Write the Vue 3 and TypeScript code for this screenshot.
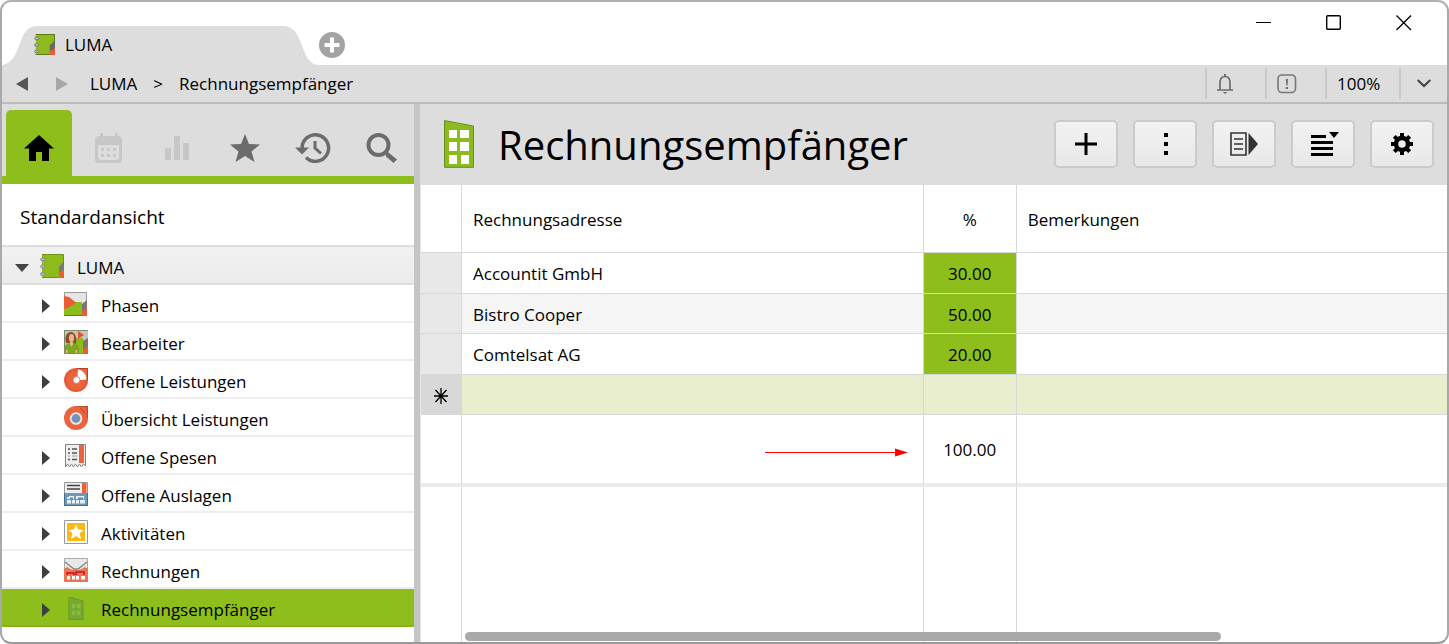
<script setup lang="ts">
import { ref } from 'vue'

interface TreeItem {
  label: string
  icon: string
  expandable: boolean
}

interface Recipient {
  address: string
  percent: string
  note: string
}

const items: TreeItem[] = [
  { label: 'Phasen', icon: 'phases', expandable: true },
  { label: 'Bearbeiter', icon: 'people', expandable: true },
  { label: 'Offene Leistungen', icon: 'open', expandable: true },
  { label: 'Übersicht Leistungen', icon: 'overview', expandable: false },
  { label: 'Offene Spesen', icon: 'receipt', expandable: true },
  { label: 'Offene Auslagen', icon: 'expenses', expandable: true },
  { label: 'Aktivitäten', icon: 'activity', expandable: true },
  { label: 'Rechnungen', icon: 'invoice', expandable: true },
  { label: 'Rechnungsempfänger', icon: 'building', expandable: true },
]

const recipients: Recipient[] = [
  { address: 'Accountit GmbH', percent: '30.00', note: '' },
  { address: 'Bistro Cooper', percent: '50.00', note: '' },
  { address: 'Comtelsat AG', percent: '20.00', note: '' },
]

const selected = ref('Rechnungsempfänger')
</script>

<template>
  <div class="window">
    <header class="titlebar">
      <div class="tab">
        <svg class="tab-shape" viewBox="0 0 315 39" aria-hidden="true">
          <path d="M0 39C11 37 14 28 18 17C22 6 26 0 36 0H281C291 0 295 7 299 17C303 28 306 37 315 39Z" fill="#ddd" />
        </svg>
        <svg class="tab-icon" viewBox="0 0 24 24" aria-hidden="true">
          <path d="M2 0H24V24H2Z" fill="#8dbb1c" /><path d="M2 .5H23.5V8M2 23.5H18" fill="none" stroke="#587d17" stroke-width="1.5" />
          <path d="M18 13L24 7V17L18 21Z" fill="#686868" /><path d="M18 20L24 16V24H18Z" fill="#e95d35" />
          <g fill="#bbb" stroke="#777"><ellipse cx="3" cy="5" rx="2.5" ry="1.5" /><ellipse cx="3" cy="12.5" rx="2.5" ry="1.5" /><ellipse cx="3" cy="20" rx="2.5" ry="1.5" /></g>
        </svg>
        <span class="tab-label">LUMA</span>
      </div>
      <button class="bare add-tab" aria-label="Neuer Tab">
        <svg width="26" height="26" viewBox="0 0 26 26"><circle cx="13" cy="13" r="13" fill="#a3a3a3" /><path d="M13 5.5V20.5M5.5 13H20.5" stroke="#fff" stroke-width="4" /></svg>
      </button>
      <div class="win-controls">
        <button class="bare" aria-label="Minimieren"><svg width="16" height="16" viewBox="0 0 16 16"><path d="M0 7.5H15" stroke="#000" /></svg></button>
        <button class="bare" aria-label="Maximieren"><svg width="16" height="16" viewBox="0 0 16 16"><rect x=".7" y=".7" width="13.6" height="13.6" rx="1" fill="none" stroke="#000" stroke-width="1.4" /></svg></button>
        <button class="bare" aria-label="Schliessen"><svg width="16" height="16" viewBox="0 0 16 16"><path d="M.5 .5L15 15M15 .5L.5 15" stroke="#000" stroke-width="1.3" /></svg></button>
      </div>
    </header>

    <div class="navbar">
      <button class="bare history-btn" aria-label="Zurück"><svg width="12" height="14" viewBox="0 0 12 14"><path d="M12 0V14L0 7Z" fill="#555" /></svg></button>
      <button class="bare history-btn" aria-label="Vorwärts"><svg width="12" height="14" viewBox="0 0 12 14"><path d="M0 0V14L12 7Z" fill="#a6a6a6" /></svg></button>
      <nav class="crumbs" aria-label="Pfad">
        <a href="#luma">LUMA</a><span>&gt;</span><a href="#empfaenger">Rechnungsempfänger</a>
      </nav>
      <div class="status">
        <button class="bare status-cell" aria-label="Mitteilungen">
          <svg width="16" height="20" viewBox="0 0 16 20"><path d="M0 16H16M3 16V9C3 5 5 2.5 8 2.5S13 5 13 9V16" fill="none" stroke="#6c6c6c" stroke-width="1.7" /><path d="M7 0H9V3H7ZM6 18H10L9 19.5H7Z" fill="#6c6c6c" /></svg>
        </button>
        <button class="bare status-cell" aria-label="Hinweise">
          <svg width="20" height="20" viewBox="0 0 20 20"><rect x="1" y="1" width="17.5" height="17.5" rx="4" fill="none" stroke="#777" stroke-width="1.6" /><path d="M8.8 5H11L10.5 11.5H9.3ZM8.8 13H11V15H8.8Z" fill="#6c6c6c" /></svg>
        </button>
        <span class="status-cell zoom">100%</span>
        <button class="bare status-cell more" aria-label="Zoomstufe wählen"><svg width="14" height="9" viewBox="0 0 14 9"><path d="M.7 1L7 7L13.3 1" fill="none" stroke="#444" stroke-width="2.2" /></svg></button>
      </div>
    </div>

    <div class="body">
      <aside class="sidebar">
        <nav class="side-tabs" aria-label="Bereiche">
          <button class="bare side-tab active" aria-label="Start"><svg width="30" height="26" viewBox="0 0 30 26"><path d="M15 0L30 13.5H25V26H18V17H12V26H5V13.5H0Z" /></svg></button>
          <button class="bare side-tab" aria-label="Kalender">
            <svg width="28" height="30" viewBox="0 0 28 30"><path d="M5 0H8V3H20V0H23V3C26 3 27 5 27 8V25C27 29 26 30 22 30H5C1 30 0 29 0 25V8C0 5 1 3 5 3ZM3 12V24C3 26 4 27 6 27H21C23 27 24 26 24 24V12Z" fill="#c7c7c7" fill-rule="evenodd" /><path d="M6 15H9V18H6ZM12 15H15V18H12ZM18 15H21V18H18ZM6 21H9V24H6ZM12 21H15V24H12ZM18 21H21V24H18Z" fill="#c7c7c7" /></svg>
          </button>
          <button class="bare side-tab" aria-label="Berichte"><svg width="24" height="24" viewBox="0 0 24 24"><path d="M0 12H6V24H0ZM9 0H15V24H9ZM18 7H24V24H18Z" fill="#c7c7c7" /></svg></button>
          <button class="bare side-tab" aria-label="Favoriten"><svg width="30" height="28" viewBox="0 0 30 28"><path d="M15 0L19 10L30 10.5L21.5 17.5L24.5 28L15 22L5.5 28L8.5 17.5L0 10.5L11 10Z" fill="#6c6c6c" /></svg></button>
          <button class="bare side-tab" aria-label="Verlauf">
            <svg width="36" height="30" viewBox="0 0 36 30"><path d="M7 15A13.3 13.3 0 1 1 11 24.6" fill="none" stroke="#6c6c6c" stroke-width="3.5" /><path d="M0 14.5H14L7 21.5Z" fill="#6c6c6c" /><path d="M20 8V15L26 20.5" fill="none" stroke="#6c6c6c" stroke-width="3" /></svg>
          </button>
          <button class="bare side-tab" aria-label="Suche"><svg width="32" height="30" viewBox="0 0 32 30"><circle cx="13.5" cy="12" r="10" fill="none" stroke="#6c6c6c" stroke-width="4" /><path d="M20 18L23.5 19.5L32 26.5L28.5 30L21 23.5Z" fill="#6c6c6c" /></svg></button>
        </nav>
        <h2 class="view-name">Standardansicht</h2>
        <ul class="tree">
          <li class="row root">
            <button class="bare row-btn">
              <svg class="arrow-down" viewBox="0 0 14 8" aria-hidden="true"><path d="M0 0H14L7 8Z" fill="#444" /></svg>
              <svg class="icon" viewBox="0 0 24 24" aria-hidden="true">
                <path d="M2 0H24V24H2Z" fill="#8dbb1c" /><path d="M2 .5H23.5V8M2 23.5H18" fill="none" stroke="#6b921b" />
                <path d="M19 13L24 7V17L19 21Z" fill="#777" /><path d="M19 18L24 16V24H19Z" fill="#e95d35" />
                <g fill="#bbb" stroke="#888"><ellipse cx="2.8" cy="5.5" rx="2.3" ry="1.5" /><ellipse cx="2.8" cy="12.5" rx="2.3" ry="1.5" /><ellipse cx="2.8" cy="20" rx="2.3" ry="1.5" /></g>
              </svg>
              <span class="row-label">LUMA</span>
            </button>
          </li>
          <li v-for="item in items" :key="item.label" class="row" :class="{ selected: item.label === selected }">
            <button class="bare row-btn child" @click="selected = item.label">
              <svg class="arrow" viewBox="0 0 8 14" aria-hidden="true"><path v-if="item.expandable" d="M0 0L8 7L0 14Z" fill="#3f3f3f" /></svg>
              <svg class="icon" viewBox="0 0 24 24" aria-hidden="true">
                <g v-if="item.icon === 'phases'">
                  <path d="M0 0H23V24H0Z" fill="#e5e5e5" /><path d="M.5 5V.5H22.5V10" fill="none" stroke="#999" /><path d="M0 10H18V24H0Z" fill="#8dbb1c" /><path d="M0 23.5H18" stroke="#56801a" />
                  <path d="M0 4L5 5L12 10.5L5 15.5L0 17Z" fill="#e95d35" /><path d="M18 12L23 8V16L18 22Z" fill="#777" /><path d="M18 19L23 16V24H18Z" fill="#e95d35" />
                </g>
                <g v-else-if="item.icon === 'people'">
                  <path d="M0 0H24V24H0Z" fill="#c4c4c4" /><path d="M12 8H19V24H12Z" fill="#8dbb1c" /><path d="M19 11L24 8V18L19 22Z" fill="#777" /><path d="M19 19L24 16V24H19Z" fill="#e95d35" /><path d="M14 1L20 5L14 9Z" fill="#e94f32" />
                  <path d="M2 13C0 6 3 2 7 2S13 7 12 14Z" fill="#88502d" /><ellipse cx="7.5" cy="8" rx="2.5" ry="4" fill="#f0b58c" /><path d="M0 16L5 13L7.5 16L10 13L15 16V24H0Z" fill="#79a91a" /><path d="M5.5 12H9.5L7.5 17ZM2 20H3.5V24H2ZM11.5 20H13V24H11.5Z" fill="#f0b58c" /><path d="M.5 0V24M0 .5H24M0 23.5H19" fill="none" stroke="#7d8a68" />
                </g>
                <g v-else-if="item.icon === 'open'">
                  <path d="M12 0H24V13A12 11 0 0 1 12 24A12 12 0 0 1 0 12A12 12 0 0 1 12 0Z" fill="#e9633d" /><path d="M13 .5H23.5V12" fill="none" stroke="#b8401d" /><circle cx="12" cy="12.5" r="10.5" fill="none" stroke="#d8532e" />
                  <path d="M14 1.5C18 1.5 22.5 6 22.5 11.5L16 12L13.5 9Z" fill="#fff" /><circle cx="12.5" cy="12" r="3.5" fill="#fff" stroke="#e9633d" stroke-width=".7" />
                </g>
                <g v-else-if="item.icon === 'overview'">
                  <path d="M12 0H24V13A12 11 0 0 1 12 24A12 12 0 0 1 0 12A12 12 0 0 1 12 0Z" fill="#e9633d" /><path d="M14 .5H23.5V12M16 2L22 8" fill="none" stroke="#c5451f" />
                  <circle cx="12" cy="12.5" r="6.3" fill="#f2e5df" /><circle cx="12" cy="12.5" r="4.4" fill="#7195b4" />
                </g>
                <g v-else-if="item.icon === 'receipt'">
                  <path d="M1.5 .5H21.5V22L19.5 20L17.5 23L15.5 20L13.5 23L11.5 20L9.5 23L7.5 20L5.5 23L3.5 20L1.5 23Z" fill="#eee" stroke="#858585" /><path d="M15 1H20V19H15Z" fill="#e9633d" /><path d="M4 5H6M8 5H13M4 9H6M8 9H13M4 15.5H6M8 15.5H13" stroke="#555" stroke-width="1.5" /><path d="M4 12H6M8 12H13" stroke="#999" />
                </g>
                <g v-else-if="item.icon === 'expenses'">
                  <path d="M.5 .5H23.5V12H.5Z" fill="#eee" stroke="#999" /><path d="M18 1H22.5V11H18Z" fill="#e9633d" /><path d="M3 3.5H16M3 7H16" stroke="#444" stroke-width="1.3" /><path d="M0 11H24V24H0Z" fill="#6d98bb" /><path d="M.5 11V23.5H23.5V11" fill="none" stroke="#426f95" />
                  <path d="M3 15H5V14H10V17H3ZM12 14H20V17H12ZM3 18H7V21.5H3ZM8 18H11V21.5H8ZM12 18H15V21.5H12ZM16 18H21V21.5H16Z" fill="#e8f0f6" /><path d="M6 15.5H9V17H6ZM14 15.5H19V17H14Z" fill="#5685ab" />
                </g>
                <g v-else-if="item.icon === 'activity'">
                  <path d="M.5 .5H23.5V23.5H.5Z" fill="#fff" stroke="#999" /><path d="M3 3H21V21H3Z" fill="#fdb813" /><path d="M12 4.5L14.2 9.5L19.5 10L15.5 13.5L17 19L12 16L7 19L8.5 13.5L4.5 10L9.8 9.5Z" fill="#fff" />
                </g>
                <g v-else-if="item.icon === 'invoice'">
                  <path d="M.5 .5H23.5V12H.5Z" fill="#e8e8e8" stroke="#aaa" /><path d="M0 11L3 9L8 12H16L21 9L24 11V24H0Z" fill="#ed744e" /><path d="M1 4L10 11H14L23 4" fill="none" stroke="#888" stroke-width="1.5" />
                  <path d="M3 17V15H10V17M12 17V14H20V17" fill="none" stroke="#c8102e" stroke-width="1.5" /><path d="M3 18H6V21.5H3ZM8 18H11V21.5H8ZM12 18H15V21.5H12ZM17 18H21V21.5H17Z" fill="#fff" />
                </g>
                <g v-else>
                  <path d="M5 1L19 5V23.5H5Z" fill="#75aa35" stroke="#6c952b" /><path d="M8 8H11V12H8ZM13 8H16.5V12H13ZM8 15H11V19H8ZM13 15H16.5V19H13Z" fill="#8dbb35" />
                </g>
              </svg>
              <span class="row-label">{{ item.label }}</span>
            </button>
          </li>
        </ul>
      </aside>

      <main class="content">
        <header class="page-head">
          <svg class="building" viewBox="0 0 30 48" aria-hidden="true"><path d="M.5 .6L29.5 6V47.5H.5Z" fill="#8dbb1f" /><path d="M.5 .6L29.5 6V47.3H.5Z" fill="none" stroke="#688f20" /><path d="M5 10H13V18H5ZM16 10H25V18H16ZM5 22H13V31H5ZM16 22H25V31H16ZM5 35H13V44H5ZM17 35H25V44H17Z" fill="#fff" /></svg>
          <h1>Rechnungsempfänger</h1>
          <div class="tools">
            <button class="tool" aria-label="Hinzufügen"><svg width="22" height="22" viewBox="0 0 22 22"><path d="M11 0V22M0 11H22" stroke="#000" stroke-width="3" /></svg></button>
            <button class="tool" aria-label="Mehr"><svg width="22" height="22" viewBox="0 0 22 22"><path d="M10 0H14V4H10ZM10 9H14V13H10ZM10 18H14V22H10Z" /></svg></button>
            <button class="tool" aria-label="Bericht"><svg width="28" height="24" viewBox="0 0 28 24"><path d="M1 1H16V23H1Z" fill="none" stroke="#333" stroke-width="1.6" /><path d="M4 7H13M4 12H13M4 17H13" stroke="#333" stroke-width="1.6" /><path d="M18.5 1L28 12L18.5 23Z" fill="#333" /></svg></button>
            <button class="tool" aria-label="Ansicht"><svg width="28" height="24" viewBox="0 0 28 24"><path d="M2 3H17V6H2ZM2 9H24V12H2ZM2 15H24V18H2ZM2 21H24V24H2ZM20 0H30L25 6Z" /></svg></button>
            <button class="tool" aria-label="Einstellungen"><svg width="22" height="22" viewBox="0 0 22 22"><circle cx="11" cy="11" r="6" fill="none" stroke="#000" stroke-width="4.5" /><path d="M11 0V4M11 18V22M0 11H4M18 11H22M3.3 3.3L6 6M16 16L18.7 18.7M18.7 3.3L16 6M6 16L3.3 18.7" stroke="#000" stroke-width="4" /></svg></button>
          </div>
        </header>

        <div class="grid">
          <table>
            <colgroup><col class="c-mark" /><col class="c-address" /><col class="c-percent" /><col /></colgroup>
            <thead>
              <tr><th></th><th>Rechnungsadresse</th><th class="num">%</th><th>Bemerkungen</th></tr>
            </thead>
            <tbody>
              <tr v-for="r in recipients" :key="r.address">
                <td class="mark"></td><td>{{ r.address }}</td><td class="num share">{{ r.percent }}</td><td>{{ r.note }}</td>
              </tr>
              <tr class="new">
                <td class="mark"><svg width="14" height="16" viewBox="0 0 14 16" aria-hidden="true"><path d="M7 0V16M0 8H14M1.5 2L12.5 14M12.5 2L1.5 14" stroke="#000" stroke-width="1.3" /></svg></td><td></td><td></td><td></td>
              </tr>
            </tbody>
            <tfoot>
              <tr class="total">
                <td></td>
                <td class="pointer"><svg width="143" height="10" viewBox="0 0 143 10" aria-hidden="true"><path d="M0 5H132V6H0ZM130 1.5L143 5.5L130 9.5Z" fill="#f00" /></svg></td>
                <td class="num">100.00</td><td></td>
              </tr>
            </tfoot>
          </table>
          <div class="rest"><div></div><div></div><div></div></div>
          <div class="scroll-track"><div class="scroll-thumb"></div></div>
        </div>
      </main>
    </div>
  </div>
</template>

<style>
body {
  background: #fff;
}
</style>

<style scoped>
.window {
  box-sizing: border-box;
  min-height: 100vh;
  display: flex;
  flex-direction: column;
  border: 2px solid #a9a9a9;
  border-top-color: #b2b2b2;
  border-bottom-color: #999;
  border-radius: 11px;
  overflow: hidden;
  background: #fff;
  color: #000;
  font-family: "Open Sans", "Noto Sans", sans-serif;
  font-size: 17px;
  line-height: 24px;
}
.window * {
  box-sizing: border-box;
}
svg {
  display: block;
  flex: none;
}
.bare {
  border: 0;
  padding: 0;
  background: none;
  font: inherit;
  color: inherit;
}
.titlebar {
  display: flex;
  height: 63px;
  padding-top: 24px;
}
.tab {
  position: relative;
  display: flex;
  align-items: center;
  gap: 10px;
  width: 315px;
  height: 39px;
  padding: 0 0 2px 32px;
}
.tab-shape {
  position: absolute;
  inset: 0;
}
.tab-icon {
  position: relative;
  width: 21px;
  height: 21px;
}
.tab-label {
  position: relative;
}
.add-tab {
  align-self: center;
  padding: 0 0 2px 2px;
}
.win-controls {
  display: flex;
  align-items: flex-start;
  gap: 54px;
  margin: -11px 35px 0 auto;
}
.navbar {
  display: flex;
  align-items: center;
  height: 39px;
  padding-left: 14px;
  background: #ddd;
  border-bottom: 2px solid #bbb;
}
.history-btn {
  margin-right: 28px;
}
.history-btn + .history-btn {
  margin-right: 22px;
}
.crumbs {
  display: flex;
  gap: 16px;
}
a {
  color: inherit;
  text-decoration: none;
}
.status {
  display: flex;
  margin-left: auto;
}
.status-cell {
  display: flex;
  align-items: center;
  height: 31px;
  border-left: 2px solid #c9c9c9;
  padding-left: 10px;
  width: 60px;
}
.zoom {
  width: 74px;
}
.more {
  width: 48px;
  padding-left: 16px;
}
.body {
  display: flex;
  flex: 1;
}
.sidebar {
  width: 418px;
  flex: none;
  border-right: 6px solid #c5c5c5;
}
.side-tabs {
  display: flex;
  gap: 2px;
  height: 80px;
  padding: 6px 0 0 4px;
  background: #ddd;
  border-bottom: 8px solid #8dbe1b;
}
.side-tab {
  display: flex;
  align-items: center;
  justify-content: center;
  width: 66px;
  flex: none;
  height: 66px;
  padding-top: 10px;
  border-radius: 5px 5px 0 0;
}
.side-tab.active {
  margin-right: 2px;
  background: #8dbe1b;
}
h2.view-name {
  margin: 0;
  padding: 21px 18px 16px;
  font-size: 19px;
  font-weight: 400;
  line-height: 24px;
}
.tree {
  list-style: none;
  margin: 0;
  padding: 0;
  border-top: 2px solid #ddd;
}
.row {
  height: 38px;
  border-bottom: 2px solid #eee;
}
.row-btn {
  display: flex;
  align-items: center;
  gap: 13px;
  width: 100%;
  height: 38px;
  padding-left: 13px;
  text-align: left;
}
.row-btn.child {
  padding-left: 40px;
}
.row-label {
  padding-top: 3px;
}
.root {
  background: linear-gradient(#f1f1f1, #ebebeb);
  border-bottom-color: #ddd;
}
.arrow-down {
  width: 14px;
  height: 8px;
  margin: 4px -2px 0 0;
}
.arrow {
  width: 8px;
  height: 14px;
  margin: 4px 1px 0 0;
}
.icon {
  width: 24px;
  height: 24px;
}
.selected {
  background: #8dbe1b;
  border-bottom-color: #84b315;
}
.content {
  flex: 1;
  min-width: 0;
  display: flex;
  flex-direction: column;
}
.page-head {
  display: flex;
  align-items: center;
  height: 81px;
  padding: 0 13px 1px 24px;
  background: #ddd;
}
.building {
  width: 30px;
  height: 48px;
}
h1 {
  margin: 0 0 0 24px;
  padding-top: 2px;
  font-size: 40px;
  font-weight: 400;
  line-height: 56px;
}
.tools {
  display: flex;
  gap: 15px;
  margin-left: auto;
}
.tool {
  display: flex;
  align-items: center;
  justify-content: center;
  width: 64px;
  height: 48px;
  padding: 0;
  border: 2px solid #cbcbcb;
  border-radius: 5px;
  background: linear-gradient(#f2f2f2, #e8e8e8);
}
.tool svg {
  overflow: visible;
}
.grid {
  position: relative;
  display: flex;
  flex-direction: column;
  flex: 1;
  border-left: 1px solid #e4e4e4;
}
table {
  width: 100%;
  table-layout: fixed;
  border-spacing: 0;
}
.c-mark {
  width: 41px;
}
.c-address {
  width: 45%;
}
.c-percent {
  width: 93px;
}
th,
td {
  padding: 2px 11px 0;
  border-right: 1px solid #d8d8d8;
  border-bottom: 1px solid #d8d8d8;
  text-align: left;
  font-weight: 400;
}
th:last-child,
td:last-child {
  border-right: 0;
}
th {
  height: 68px;
}
td {
  height: 40px;
}
tbody tr:nth-child(odd) td {
  height: 41px;
}
tbody tr:nth-child(2) td {
  background: #f5f5f5;
}
th.num,
td.num {
  padding: 2px 0 0;
  text-align: center;
}
tbody tr td.mark {
  padding: 2px 13px 0;
  background: #e8e8e8;
}
tbody tr td.share {
  background: #8dbe1b;
}
tbody .new td {
  background: #e8eece;
}
tbody .new td.mark {
  background: #d8d8d8;
}
tfoot .total td {
  height: 72px;
  border-bottom: 4px solid #ececec;
}
.pointer svg {
  margin: 4px 4px 0 auto;
}
.rest {
  flex: 1;
  display: grid;
  grid-template-columns: 41px 45% 93px;
}
.rest div {
  border-right: 1px solid #d8d8d8;
}
.scroll-track {
  position: absolute;
  left: 44px;
  right: 0;
  bottom: 1px;
}
.scroll-thumb {
  width: 77%;
  height: 9px;
  border-radius: 5px;
  background: #a9a9a9;
}
</style>
